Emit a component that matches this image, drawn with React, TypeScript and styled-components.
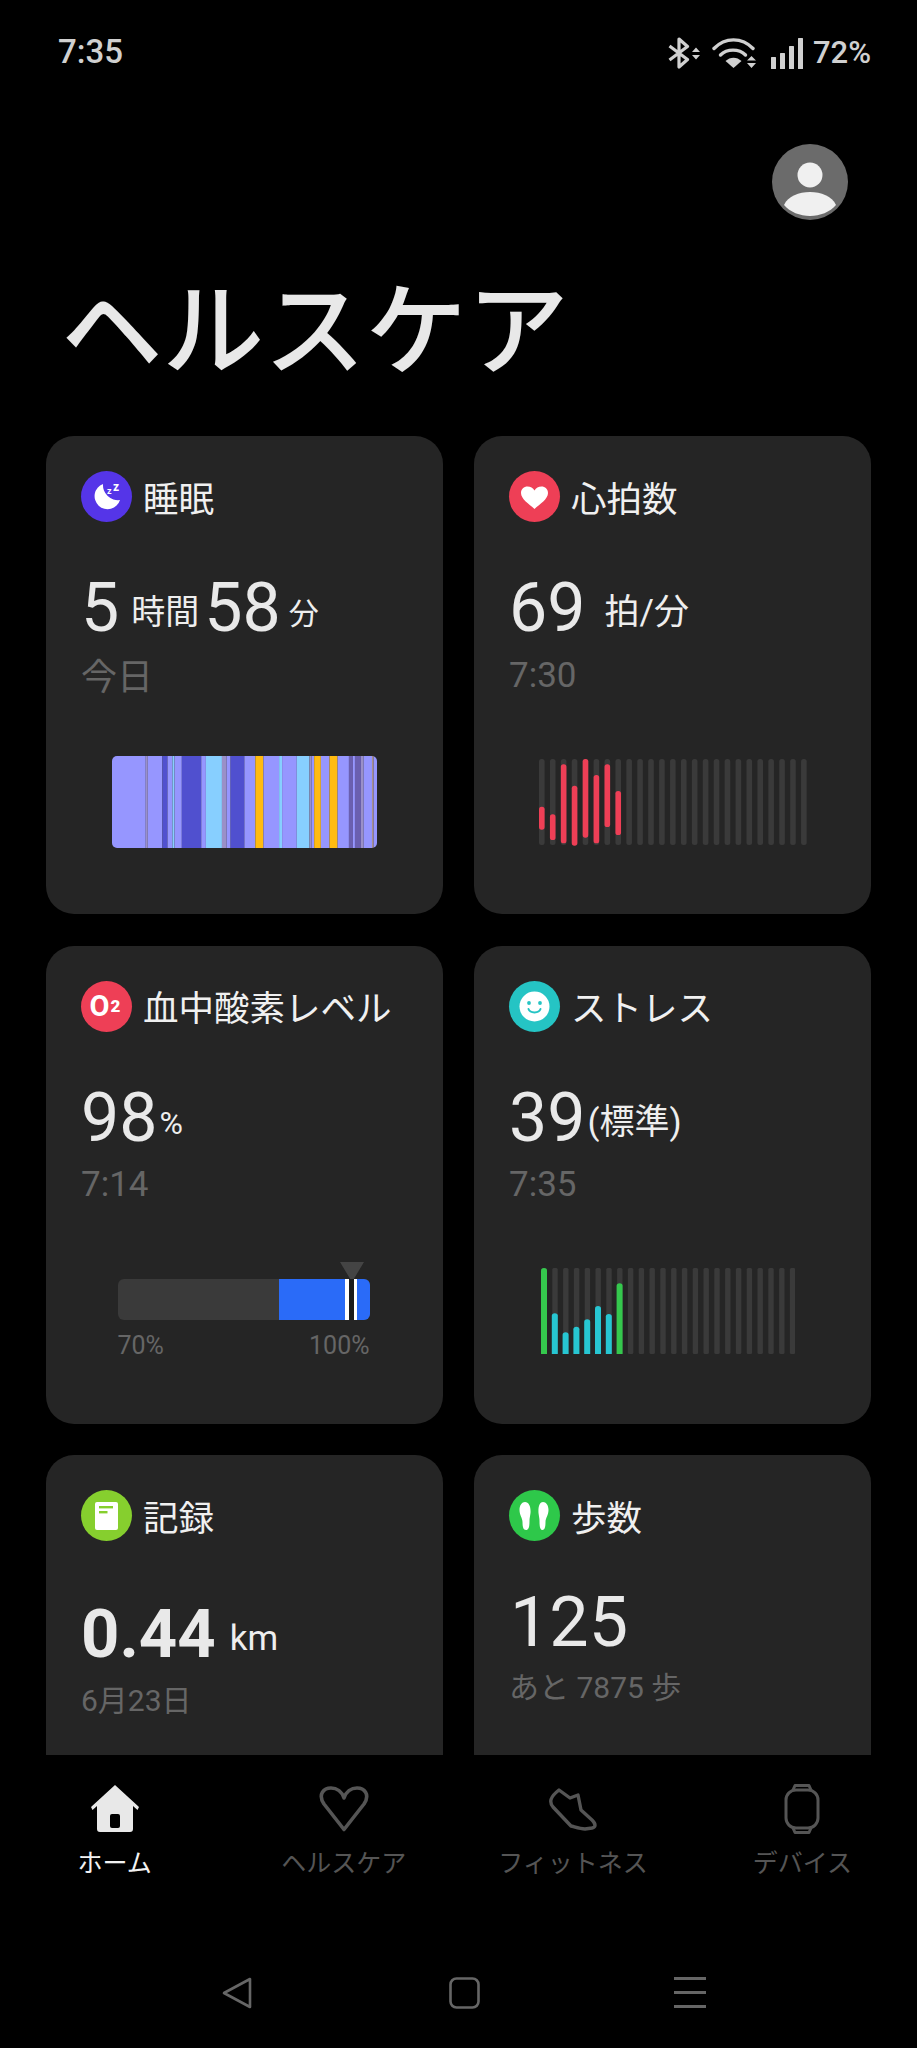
import React from "react";
import styled, { createGlobalStyle } from "styled-components";

const FONT = `Roboto, "Noto Sans CJK JP", sans-serif`;

const Global = createGlobalStyle`
  html, body { margin: 0; padding: 0; background: #000; }
  #root { width: 917px; height: 2048px; overflow: hidden; }
`;

const Screen = styled.div`
  width: 917px; height: 2048px; background: #000; display: flex; flex-direction: column;
  font-family: ${FONT}; color: #e8e8e8; overflow: hidden;
`;
const StatusBar = styled.div`
  height: 104px; box-sizing: border-box; padding: 33px 46px 0 58px; display: flex; justify-content: space-between; align-items: flex-start;
`;
const Clock = styled.div`font-size: 33px; line-height: 38px; font-weight: 500; color: #d0d0d0;`;
const StatusIcons = styled.div`display: flex; align-items: flex-start; padding-top: 4px; color: #d0d0d0;`;
const Battery = styled.span`font-size: 31px; line-height: 34px; font-weight: 500; margin-left: 9px; margin-top: -1px;`;
const StatusSvg = styled.svg<{ $ml: number }>`display: block; margin-left: ${p => p.$ml}px;`;

const Header = styled.header`display: flex; flex-direction: column; padding: 40px 69px 53px 61px;`;
const AvatarRow = styled.div`display: flex; justify-content: flex-end;`;
const Title = styled.h1`
  margin: 43px 0 0; font-size: 101.5px; line-height: 120px; font-weight: 500; color: #e8e8e8;
  font-family: "Noto Sans CJK JP", sans-serif;
`;

const Scroll = styled.main`flex: 1; min-height: 0; overflow: hidden; padding: 0 46px;`;
const Grid = styled.div`display: grid; grid-template-columns: 397px 397px; column-gap: 31px; row-gap: 31.5px;`;
const Card = styled.section`
  height: 478px; box-sizing: border-box; background: #252525; border-radius: 28px; padding: 35px 35px 0;
  display: flex; flex-direction: column;
`;
const CardHead = styled.div`display: flex; align-items: center; gap: 11px; height: 51px;`;
const Badge = styled.div<{ $bg: string }>`
  width: 51px; height: 51px; border-radius: 50%; background: ${p => p.$bg}; flex: none;
  display: flex; align-items: center; justify-content: center; color: #fff; font-weight: 700;
`;
const CardTitle = styled.h2`margin: 0; font-size: 35.5px; line-height: 44px; font-weight: 400; color: #f0f0f0; white-space: nowrap; font-family: "Noto Sans CJK JP", sans-serif;`;
const ValueRow = styled.div<{ $top: number }>`display: flex; align-items: baseline; height: 80px; margin-top: ${p => p.$top}px; white-space: nowrap;`;
const Big = styled.span<{ $bold?: boolean; $ml?: number; $size?: number }>`
  font-size: ${p => p.$size ?? 68}px; line-height: 80px; font-weight: ${p => (p.$bold ? 700 : 400)}; margin-left: ${p => p.$ml ?? 0}px; color: #e9e9e9;
`;
const Unit = styled.span<{ $ml: number; $size?: number }>`
  font-size: ${p => p.$size ?? 34}px; line-height: 44px; margin-left: ${p => p.$ml}px; color: #eee; position: relative; top: -7px;
`;
const Sub = styled.div<{ $top: number; $size?: number }>`
  font-size: ${p => p.$size ?? 35}px; line-height: 44px; height: 44px; margin-top: ${p => p.$top}px; color: #666; white-space: nowrap;
`;
const ChartSlot = styled.div<{ $top: number; $shift?: number }>`
  display: flex; justify-content: center; margin-top: ${p => p.$top}px; margin-left: ${p => p.$shift ?? 0}px;
`;
const SleepSvg = styled.svg`display: block; border-radius: 5px;`;

const Range = styled.div`width: 252px; position: relative; padding-top: 17px;`;
const RangeTrack = styled.div`height: 41px; border-radius: 6px; background: #3a3a3a; overflow: hidden; display: flex; justify-content: flex-end;`;
const RangeFill = styled.div`width: 91px; height: 100%; background: #2a6bf8; position: relative;`;
const Marker = styled.div`
  position: absolute; top: 0; bottom: 0; left: 66px; width: 12px; box-sizing: border-box; background: #1c1c1c;
  border-left: 4px solid #fff; border-right: 3px solid #fff;
`;
const Pointer = styled.svg`position: absolute; top: 0; left: 221px; display: block;`;
const RangeLabels = styled.div`display: flex; justify-content: space-between; margin-top: 11px; font-size: 25px; line-height: 30px; color: #666;`;

const TabBar = styled.nav`height: 145px; flex: none; display: grid; grid-template-columns: repeat(4, 1fr); box-sizing: border-box; padding-top: 28px;`;
const Tab = styled.div<{ $active?: boolean }>`
  display: flex; flex-direction: column; align-items: center; font-family: "Noto Sans CJK JP", sans-serif;
  color: ${p => (p.$active ? "#f2f2f2" : "#555")};
`;
const TabIcon = styled.div`height: 52px; display: flex; align-items: center; justify-content: center;`;
const TabLabel = styled.span`font-size: 25px; line-height: 34px; margin-top: 9px; white-space: nowrap;`;

const SysNav = styled.div`flex: none; height: 148px; display: flex; align-items: flex-start; padding: 77px 0 0 222px; box-sizing: border-box; color: #666;`;
const SysSvg = styled.svg<{ $ml?: number }>`display: block; margin-left: ${p => p.$ml ?? 0}px;`;

const O2 = styled.span`font-size: 29px; line-height: 51px; margin-left: -3px; display: flex; align-items: center;`;
const O2Sub = styled.span`font-size: 17px; font-weight: 900; margin-left: 1px;`;

const SLEEP: [number, string][] = (() => {
  const p = "#9696ff", d = "#5050cf", s = "#87cfff", y = "#ffbb11", g = "#9a90c8", m = "#6a5fb0";
  return [
    [138, p], [144, g], [188, p], [203, d], [218, p], [224, s], [246, p], [304, d], [318, p], [366, s], [380, g], [392, p],
    [433, d], [466, p], [490, y], [537, p], [546, s], [590, p], [628, s], [634, g], [642, p], [662, y], [688, p], [712, y],
    [746, p], [758, m], [764, p], [782, m], [790, g], [815, p], [820, "#a8908f"], [830, p],
  ] as [number, string][];
})();

const SleepChart = () => {
  let x = 37;
  return (
    <SleepSvg width="265" height="92" viewBox="37 0 793 276" preserveAspectRatio="none">
      {SLEEP.map(([end, c]) => {
        const r = <rect key={end} x={x} y="0" width={end - x} height="276" fill={c} />;
        x = end;
        return r;
      })}
    </SleepSvg>
  );
};

const HR: [number, number][] = [[185, 254], [208, 285], [58, 295], [122, 302], [42, 278], [90, 295], [58, 246], [138, 270]];
const HeartChart = () => (
  <svg width="268" height="88" viewBox="0 0 268 88" style={{ display: "block" }}>
    {Array.from({ length: 25 }, (_, i) => (
      <rect key={i} x={i * 10.92} y="1" width="5.6" height="86" rx="2.5" fill="#3a3a3a" />
    ))}
    {HR.map(([a, b], i) => (
      <rect key={i} x={i * 10.92} y={(a - 42) / 3 + 1} width="5.6" height={(b - a) / 3} rx="2.6" fill="#ee3f56" />
    ))}
  </svg>
);

const STRESS = [42, 178, 235, 218, 196, 156, 180, 88];
const StressChart = () => (
  <svg width="254" height="88" viewBox="0 0 254 88" style={{ display: "block" }}>
    {Array.from({ length: 24 }, (_, i) => (
      <rect key={i} x={i * 10.8 + 0.5} y="1" width="5.4" height="86" rx="1.5" fill="#3a3a3a" />
    ))}
    {STRESS.map((t, i) => (
      <path
        key={i}
        d={`M${i * 10.8} 87 V${(t - 42) / 3 + 3.5} a3 2.5 0 0 1 6 0 V87 Z`}
        fill={i === 0 || i === 7 ? "#35c84d" : "#27c6d2"}
      />
    ))}
  </svg>
);

const BluetoothIcon = () => (
  <StatusSvg $ml={0} width="33" height="32" viewBox="0 0 33 32" fill="none">
    <path d="M1.5 9 L19.5 22.5 L11 30 V2 L19.5 9.5 L1.5 23" stroke="currentColor" strokeWidth="3.2" strokeLinejoin="round" />
    <path d="M28 10.5 L32 15 H24 Z M24 18 H32 L28 22.5 Z" fill="currentColor" />
  </StatusSvg>
);
const WifiIcon = () => (
  <StatusSvg $ml={11} width="45" height="32" viewBox="0 0 45 32" fill="none">
    <path d="M2 11.5 C13 0 30 0 41 11.5" stroke="currentColor" strokeWidth="3.4" strokeLinecap="round" />
    <path d="M8.5 18 C15 11.5 27 11.5 33.5 18" stroke="currentColor" strokeWidth="3.4" strokeLinecap="round" />
    <path d="M13.5 24 C18 19.5 25 19.5 29.5 24 L21.5 31 Z" fill="currentColor" />
    <path d="M39.5 19 L44 23.5 H35 Z M35 26 H44 L39.5 31 Z" fill="currentColor" />
  </StatusSvg>
);
const SignalIcon = () => (
  <StatusSvg $ml={14} width="33" height="32" viewBox="0 0 33 32" fill="currentColor">
    <rect x="0" y="20" width="5" height="12" rx="0.5" />
    <rect x="9" y="16" width="5" height="16" rx="0.5" />
    <rect x="18" y="9" width="5" height="23" rx="0.5" />
    <rect x="27" y="1" width="5" height="31" rx="0.5" />
  </StatusSvg>
);
const Avatar = () => (
  <svg width="76" height="76" viewBox="0 0 76 76" style={{ display: "block" }}>
    <circle cx="38" cy="38" r="38" fill="#6b6b6b" />
    <ellipse cx="38" cy="31" rx="12.5" ry="12.5" fill="#f0f0f0" />
    <path d="M12 61 C16 52 27 48 38 48 C49 48 60 52 64 61 C58 68 48 72 38 72 C28 72 18 68 12 61 Z" fill="#f0f0f0" />
  </svg>
);

const MoonIcon = () => (
  <svg width="51" height="51" viewBox="0 0 51 51">
    <path d="M22 13 A13 13 0 1 0 39 29 A15 15 0 0 1 22 13 Z" fill="#fff" />
    <text x="26" y="23" fontSize="9" fontWeight="700" fill="#fff" fontFamily="Roboto">z</text>
    <text x="32" y="20" fontSize="12" fontWeight="700" fill="#fff" fontFamily="Roboto">z</text>
  </svg>
);
const HeartBadge = () => (
  <svg width="51" height="51" viewBox="0 0 51 51">
    <path d="M25.5 38 C20 33 12 28 12 22 C12 18 15 15.5 18.5 15.5 C21.5 15.5 24 17 25.5 19.5 C27 17 29.5 15.5 32.5 15.5 C36 15.5 39 18 39 22 C39 28 31 33 25.5 38 Z" fill="#fff" />
  </svg>
);
const SmileIcon = () => (
  <svg width="51" height="51" viewBox="0 0 51 51">
    <circle cx="25.5" cy="25.5" r="15" fill="#fff" />
    <circle cx="20" cy="22" r="1.9" fill="#25c4c4" />
    <circle cx="31" cy="22" r="1.9" fill="#25c4c4" />
    <path d="M19.5 28 C21 32.5 30 32.5 31.5 28" stroke="#25c4c4" strokeWidth="2" fill="none" strokeLinecap="round" />
  </svg>
);
const NoteIcon = () => (
  <svg width="51" height="51" viewBox="0 0 51 51">
    <rect x="14" y="12" width="23" height="28" rx="2" fill="#fff" />
    <rect x="18" y="16" width="14" height="2.4" fill="#86cf2e" />
    <rect x="18" y="21" width="8.5" height="2.4" fill="#86cf2e" />
  </svg>
);
const StepsIcon = () => (
  <svg width="51" height="51" viewBox="0 0 51 51" fill="#fff">
    <path d="M16 12 C20 12 22 17 21.5 23 C21 27 20.5 28 20.5 31 C20.5 36 20 40 17 40 C14 40 13.5 36 13.5 32 C13.5 28 10.5 25 10.5 20 C10.5 15 13 12 16 12 Z" />
    <path d="M34 12 C31 12 29 16 29.5 23 C30 27 30.5 28 30.5 31 C30.5 36 31 40 33.5 40 C36 40 36.5 36 36.5 32 C36.5 28 39.5 25 39.5 20 C39.5 15 37 12 34 12 Z" />
  </svg>
);

const HomeTab = () => (
  <svg width="50" height="48" viewBox="0 0 50 48">
    <path d="M25 0 L49 22 L47.5 25 L43 21 V44 Q43 47 40 47 H10 Q7 47 7 44 V21 L2.5 25 L1 22 Z" fill="#e8e8e8" />
    <rect x="20" y="29" width="10" height="14" rx="2" fill="#000" />
  </svg>
);
const HeartTab = () => (
  <svg width="52" height="47" viewBox="0 0 52 47" fill="none">
    <path d="M26 43.5 L6 18 C-0.5 8 6 2 13 2 C19 2 24 6 26 12 C28 6 33 2 39 2 C46 2 52.5 8 46 18 Z" stroke="#555" strokeWidth="3.6" strokeLinejoin="round" />
  </svg>
);
const ShoeTab = () => (
  <svg width="50" height="44" viewBox="0 0 50 44" fill="none">
    <path d="M11 3 L22 11 L30 8 L33 23 L44 33 C48 37 48 40 44 41 L37 42 C32 42 27 40 23 39 L5 20 C1 15 2 10 11 3 Z" stroke="#555" strokeWidth="3.4" strokeLinejoin="round" />
  </svg>
);
const WatchTab = () => (
  <svg width="36" height="50" viewBox="0 0 36 50" fill="none" stroke="#555" strokeWidth="3">
    <rect x="2" y="6" width="32" height="38" rx="10" />
    <path d="M9 6 L11 1.5 H25 L27 6 M9 44 L11 48.5 H25 L27 44" strokeLinejoin="round" />
  </svg>
);

export default function App() {
  return (
    <Screen>
      <Global />
      <StatusBar>
        <Clock>7:35</Clock>
        <StatusIcons>
          <BluetoothIcon />
          <WifiIcon />
          <SignalIcon />
          <Battery>72%</Battery>
        </StatusIcons>
      </StatusBar>
      <Header>
        <AvatarRow><Avatar /></AvatarRow>
        <Title>ヘルスケア</Title>
      </Header>
      <Scroll>
        <Grid>
          <Card>
            <CardHead>
              <Badge $bg="#5535e8"><MoonIcon /></Badge>
              <CardTitle>睡眠</CardTitle>
            </CardHead>
            <ValueRow $top={46}>
              <Big>5</Big><Unit $ml={12}>時間</Unit><Big $ml={5}>58</Big><Unit $ml={8} $size={30}>分</Unit>
            </ValueRow>
            <Sub $top={8} $size={36}>今日</Sub>
            <ChartSlot $top={56}><SleepChart /></ChartSlot>
          </Card>
          <Card>
            <CardHead>
              <Badge $bg="#ee3f56"><HeartBadge /></Badge>
              <CardTitle>心拍数</CardTitle>
            </CardHead>
            <ValueRow $top={46}>
              <Big>69</Big><Unit $ml={19} $size={35}>拍/分</Unit>
            </ValueRow>
            <Sub $top={6}>7:30</Sub>
            <ChartSlot $top={60}><HeartChart /></ChartSlot>
          </Card>
          <Card>
            <CardHead>
              <Badge $bg="#ee3f56"><O2>O<O2Sub>2</O2Sub></O2></Badge>
              <CardTitle>血中酸素レベル</CardTitle>
            </CardHead>
            <ValueRow $top={46}>
              <Big>98</Big><Unit $ml={2} $size={32}>%</Unit>
            </ValueRow>
            <Sub $top={5}>7:14</Sub>
            <ChartSlot $top={55} $shift={-2}>
              <Range>
                <Pointer width="26" height="22" viewBox="0 0 26 22"><path d="M1 0 H25 L13 20 Z" fill="#444" /></Pointer>
                <RangeTrack>
                  <RangeFill><Marker /></RangeFill>
                </RangeTrack>
                <RangeLabels><span>70%</span><span>100%</span></RangeLabels>
              </Range>
            </ChartSlot>
          </Card>
          <Card>
            <CardHead>
              <Badge $bg="#25c4c4"><SmileIcon /></Badge>
              <CardTitle>ストレス</CardTitle>
            </CardHead>
            <ValueRow $top={46}>
              <Big>39</Big><Unit $ml={2} $size={35}>(標準)</Unit>
            </ValueRow>
            <Sub $top={5}>7:35</Sub>
            <ChartSlot $top={60} $shift={-10}><StressChart /></ChartSlot>
          </Card>
          <Card>
            <CardHead>
              <Badge $bg="#86cf2e"><NoteIcon /></Badge>
              <CardTitle>記録</CardTitle>
            </CardHead>
            <ValueRow $top={53}>
              <Big $bold $size={67}>0.44</Big><Unit $ml={14} $size={35}>km</Unit>
            </ValueRow>
            <Sub $top={5} $size={30}>6月23日</Sub>
          </Card>
          <Card>
            <CardHead>
              <Badge $bg="#2ec84a"><StepsIcon /></Badge>
              <CardTitle>歩数</CardTitle>
            </CardHead>
            <ValueRow $top={41}>
              <Big $size={70} $ml={1}>125</Big>
            </ValueRow>
            <Sub $top={4} $size={30}>あと 7875 歩</Sub>
          </Card>
        </Grid>
      </Scroll>
      <TabBar>
        <Tab $active><TabIcon><HomeTab /></TabIcon><TabLabel>ホーム</TabLabel></Tab>
        <Tab><TabIcon><HeartTab /></TabIcon><TabLabel>ヘルスケア</TabLabel></Tab>
        <Tab><TabIcon><ShoeTab /></TabIcon><TabLabel>フィットネス</TabLabel></Tab>
        <Tab><TabIcon><WatchTab /></TabIcon><TabLabel>デバイス</TabLabel></Tab>
      </TabBar>
      <SysNav>
        <SysSvg width="30" height="32" viewBox="0 0 30 32" fill="none" stroke="currentColor" strokeWidth="2.6">
          <path d="M28 2 V30 L2 16 Z" strokeLinejoin="round" />
        </SysSvg>
        <SysSvg $ml={197} width="31" height="32" viewBox="0 0 31 32" fill="none" stroke="currentColor" strokeWidth="2.6">
          <rect x="1.5" y="1.5" width="28" height="29" rx="6" />
        </SysSvg>
        <SysSvg $ml={194} width="33" height="32" viewBox="0 0 33 32" fill="currentColor">
          <rect x="0" y="0" width="32" height="3" />
          <rect x="0" y="14" width="32" height="3" />
          <rect x="0" y="28" width="32" height="3" />
        </SysSvg>
      </SysNav>
    </Screen>
  );
}
